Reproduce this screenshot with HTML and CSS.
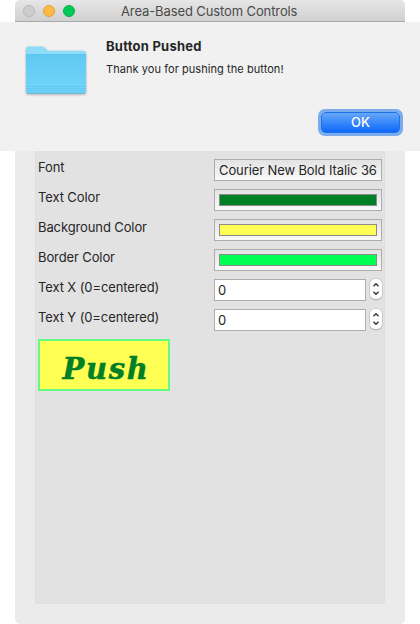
FILE: index.html
```html
<!DOCTYPE html>
<html lang="en">
<head>
<meta charset="utf-8">
<title>Area-Based Custom Controls</title>
<link rel="stylesheet" href="styles.css">
</head>
<body>
<div class="window">
  <header class="titlebar">
    <div class="lights"><i class="light close"></i><i class="light minimize"></i><i class="light zoom"></i></div>
    <span class="title">Area-Based Custom Controls</span>
  </header>
  <section class="sheet">
    <svg class="folder" width="64" height="54" viewBox="0 0 64 54">
      <defs><linearGradient id="front" x1="0" y1="0" x2="0" y2="1"><stop offset="0" stop-color="#5fc8f2"/><stop offset="1" stop-color="#74d5f9"/></linearGradient></defs>
      <path d="M2 10V3.500q0-2 2-2h14q1.500 0 2.500 1l2.500 2.500q.8.700 2 .700H60q2 0 2 2V20H2z" fill="#8fdcfa"/>
      <path d="M2 9h60V46.500q0 2-2 2H4q-2 0-2-2z" fill="url(#front)"/>
      <path d="M2 9.500h60" stroke="#5cc4ee"/>
      <path d="M2 41.500h60M2 43.500h60M2 45.500h60" stroke="#62c5ec" stroke-width=".8"/>
      <path d="M3 48h58" stroke="#52b4da" stroke-width=".8"/>
    </svg>
    <div class="message">
      <h1>Button Pushed</h1>
      <p>Thank you for pushing the button!</p>
    </div>
    <button class="ok">OK</button>
  </section>
  <main class="panel">
    <div class="row"><span class="label">Font</span><div class="field well"><span class="fontname">Courier New Bold Italic 36</span></div></div>
    <div class="row"><span class="label">Text Color</span><div class="field well"><i class="swatch green"></i></div></div>
    <div class="row"><span class="label">Background Color</span><div class="field well"><i class="swatch yellow"></i></div></div>
    <div class="row"><span class="label">Border Color</span><div class="field well"><i class="swatch lime"></i></div></div>
    <div class="row"><span class="label">Text X (0=centered)</span><div class="field number">0</div>
      <svg class="stepper" width="12" height="20" viewBox="0 0 12 20"><path d="M3.500 7.300L6 4.800l2.500 2.500M3.500 12.700L6 15.200l2.500-2.500"/></svg></div>
    <div class="row"><span class="label">Text Y (0=centered)</span><div class="field number">0</div>
      <svg class="stepper" width="12" height="20" viewBox="0 0 12 20"><path d="M3.500 7.300L6 4.800l2.500 2.500M3.500 12.700L6 15.200l2.500-2.500"/></svg></div>
    <button class="push">Push</button>
  </main>
</div>
</body>
</html>
```
FILE: styles.css
```css
* { box-sizing: border-box; }
body {
  margin: 0;
  background: #fff;
  color: #262626;
  font: 13px/16px Inter, "Liberation Sans", sans-serif;
  letter-spacing: -.11px;
}
.window {
  width: 390px;
  height: 624px;
  margin: 0 auto;
  display: flex;
  flex-direction: column;
  background: #ebebeb;
  border-radius: 5px;
}
.titlebar {
  height: 22px;
  display: flex;
  align-items: center;
  background: linear-gradient(#e6e6e6, #d0d0d0);
  border-bottom: 1px solid #a9a9a9;
  border-radius: 5px 5px 0 0;
}
.lights { display: flex; gap: 8px; padding: 1px 0 0 8px; width: 106px; }
.light { width: 12px; height: 12px; border-radius: 50%; border: 1px solid #b9b9b9; background: #cdcdcd; }
.minimize { border-color: #e5a03a; background: #ffb945; }
.zoom { border-color: #08ae45; background: #00ca56; }
.title { color: #4b4b4b; padding-top: 1px; white-space: nowrap; }
.sheet {
  height: 129px;
  margin: 0 -15px;
  display: flex;
  background: #f1f1f1;
}
.folder { margin: 23px 0 0 24px; filter: drop-shadow(0 1px 1px rgba(0,0,0,.3)); }
.message { width: 212px; margin: 16px 0 0 18px; }
.message h1 { margin: 0; font-size: 13px; line-height: 16px; font-weight: 700; letter-spacing: .24px; }
.message p { margin: 8px 0 0; font-size: 11px; line-height: 14px; letter-spacing: .06px; white-space: nowrap; }
.ok {
  width: 79px;
  height: 21px;
  margin: 90px 0 0 3px;
  padding: 0 0 1px;
  border: 1px solid #1b72e8;
  border-radius: 4px;
  background: linear-gradient(#66a7f8, #0c69fb);
  box-shadow: 0 0 0 3px #7aaced;
  color: #fff;
  font: 500 13px/18px Inter, sans-serif;
}
.panel {
  width: 350px;
  height: 453px;
  margin: 0 20px;
  padding: 8px 2px 0;
  background: #e2e2e2;
  border: solid #dedede;
  border-width: 0 1px 1px;
  border-radius: 0 0 4px 4px;
}
.row { display: flex; height: 22px; margin-bottom: 8px; }
.label { flex: none; width: 176px; white-space: nowrap; }
.field { flex: none; height: 22px; border: 1px solid #adadad; }
.well { width: 168px; padding: 4px; background: linear-gradient(#e3e3e3, #f9f9f9); }
.fontname { display: block; line-height: 13px; white-space: nowrap; }
.swatch { display: block; height: 12px; border: 1px solid #8b8b8b; }
.green { background: #008026; }
.yellow { background: #ffff56; }
.lime { background: #00ff50; }
.number { width: 152px; padding: 3px 3px; line-height: 15px; background: #fff; }
.stepper {
  flex: none;
  margin-left: 4px;
  border-radius: 5px;
  background: #fff;
  box-shadow: 0 0 0 .5px #bcbcbc, 0 1px 1px rgba(0,0,0,.3);
  fill: none;
  stroke: #333;
  stroke-width: 1.4;
}
.push {
  display: block;
  width: 132px;
  height: 52px;
  padding: 8px 0 0 4px;
  border: 2px solid #65fb83;
  background: #ffff54;
  color: #008026;
  font: italic bold 29px/40px "DejaVu Serif", serif;
  letter-spacing: 1.7px;
  -webkit-text-stroke: .5px #008026;
}
```
